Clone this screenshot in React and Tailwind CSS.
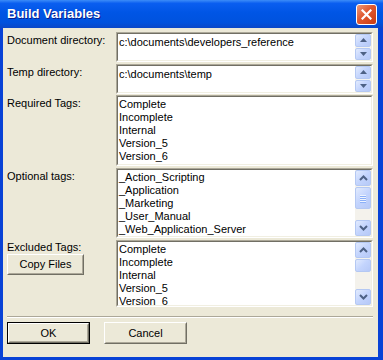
import React from "react";

const font = { fontFamily: '"Liberation Sans", Arial, sans-serif' };

function Sunken({ className = "", children }) {
  return (
    <div className={"border border-t-[#aca899] border-l-[#aca899] border-r-white border-b-white " + className}>
      <div className="h-full w-full border border-t-[#716f64] border-l-[#716f64] border-r-[#f1efe2] border-b-[#f1efe2] bg-white flex overflow-hidden">
        {children}
      </div>
    </div>
  );
}

function Tri({ up }) {
  return (
    <svg width="7" height="4" viewBox="0 0 7 4">
      {up ? <path d="M0 4 L3.5 0 L7 4 Z" fill="#4d6185" /> : <path d="M0 0 L3.5 4 L7 0 Z" fill="#4d6185" />}
    </svg>
  );
}

function Chev({ up }) {
  return (
    <svg width="9" height="6" viewBox="0 0 9 6">
      {up ? (
        <path d="M1 5 L4.5 1.5 L8 5" fill="none" stroke="#4d6185" strokeWidth="2" />
      ) : (
        <path d="M1 1 L4.5 4.5 L8 1" fill="none" stroke="#4d6185" strokeWidth="2" />
      )}
    </svg>
  );
}

const btnCls =
  "flex items-center justify-center rounded-[2px] border border-[#b4c8f3] bg-[linear-gradient(135deg,#e2ebfe,#c3d4fd_50%,#b6c9f7)]";

function SpinScroll() {
  return (
    <div className="w-[16px] flex flex-col gap-[1px] bg-[#f4f3ee]">
      <div className={btnCls + " flex-1"}><Tri up /></div>
      <div className={btnCls + " flex-1"}><Tri /></div>
    </div>
  );
}

function ListScroll({ thumbH, grip }) {
  return (
    <div className="w-[16px] flex flex-col bg-[#f4f2ec]">
      <div className={btnCls + " h-[16px]"}><Chev up /></div>
      <div className="flex-1 pt-[1px]">
        <div className={btnCls + " flex-col gap-[1px]"} style={{ height: thumbH }}>
          {grip &&
            [0, 1, 2, 3].map((i) => (
              <div key={i} className="w-[6px] h-[1px] bg-[#eef4fe] shadow-[0_1px_0_#8cb0f8]" />
            ))}
        </div>
      </div>
      <div className={btnCls + " h-[16px]"}><Chev /></div>
    </div>
  );
}

function Items({ items }) {
  return (
    <div className="flex-1 pt-[1px] pl-[1px] text-[11px] leading-[13px] text-black">
      {items.map((t) => (
        <div key={t} className="whitespace-nowrap">{t}</div>
      ))}
    </div>
  );
}

function Btn({ children, className = "", def }) {
  const inner = (
    <div className="h-full w-full border border-t-white border-l-white border-r-[#716f64] border-b-[#716f64] bg-[#ece9d8]">
      <div className="h-full w-full border border-t-[#ece9d8] border-l-[#ece9d8] border-r-[#aca899] border-b-[#aca899] flex items-center justify-center text-[11px] text-black">
        {children}
      </div>
    </div>
  );
  return def ? (
    <div className={"border border-black " + className}>{inner}</div>
  ) : (
    <div className={className}>{inner}</div>
  );
}

const tags = ["Complete", "Incomplete", "Internal", "Version_5", "Version_6"];

export default function App() {
  return (
    <div className="w-[383px] h-[360px] flex flex-col bg-[#0842d6]" style={font}>
      <div className="h-[28px] flex items-center justify-between pl-[7px] pr-[6px] bg-[linear-gradient(to_bottom,#3c8cf8,#0a5ef0_12%,#0055e5_45%,#0052de_80%,#0a47c8)]">
        <span className="text-white font-bold text-[13px] [text-shadow:1px_1px_0_#0a1e8c]">Build Variables</span>
        <div className="w-[21px] h-[21px] rounded-[3px] border border-white bg-[linear-gradient(135deg,#eb9a7c,#e0582f_45%,#c83c12)] flex items-center justify-center">
          <svg width="11" height="11" viewBox="0 0 11 11">
            <path d="M1.5 1.5 L9.5 9.5 M9.5 1.5 L1.5 9.5" stroke="white" strokeWidth="2.2" strokeLinecap="square" />
          </svg>
        </div>
      </div>
      <div className="flex-1 ml-[3px] mr-[5px] mb-[3px] bg-[#ece9d8] pt-[4px] pl-[4px] pr-[5px] flex flex-col text-[11px] leading-[13px] text-black">
        <div className="flex h-[30px]">
          <div className="w-[109px] pt-[2px]">Document directory:</div>
          <Sunken className="flex-1">
            <div className="flex-1 pt-[2px] pl-[1px] whitespace-nowrap">c:\documents\developers_reference</div>
            <SpinScroll />
          </Sunken>
        </div>
        <div className="flex h-[30px] mt-[2px]">
          <div className="w-[109px] pt-[2px]">Temp directory:</div>
          <Sunken className="flex-1">
            <div className="flex-1 pt-[2px] pl-[1px] whitespace-nowrap">c:\documents\temp</div>
            <SpinScroll />
          </Sunken>
        </div>
        <div className="flex h-[71px] mt-[1px]">
          <div className="w-[109px] pt-[2px]">Required Tags:</div>
          <Sunken className="flex-1">
            <Items items={tags} />
          </Sunken>
        </div>
        <div className="flex h-[70px] mt-[2px]">
          <div className="w-[109px] pt-[2px]">Optional tags:</div>
          <Sunken className="flex-1">
            <Items items={["_Action_Scripting", "_Application", "_Marketing", "_User_Manual", "_Web_Application_Server"]} />
            <ListScroll thumbH={22} grip />
          </Sunken>
        </div>
        <div className="flex h-[67px] mt-[2px]">
          <div className="w-[109px] pt-[1px] flex flex-col">
            <div>Excluded Tags:</div>
            <Btn className="w-[77px] h-[21px] mt-[0px]">Copy Files</Btn>
          </div>
          <Sunken className="flex-1">
            <Items items={tags} />
            <ListScroll thumbH={13} />
          </Sunken>
        </div>
        <div className="mt-[9px] h-[2px] border-t border-t-[#aca899] border-b border-b-white" />
        <div className="flex mt-[4px] gap-[14px]">
          <Btn def className="w-[83px] h-[22px]">OK</Btn>
          <Btn className="w-[83px] h-[22px]">Cancel</Btn>
        </div>
      </div>
    </div>
  );
}
